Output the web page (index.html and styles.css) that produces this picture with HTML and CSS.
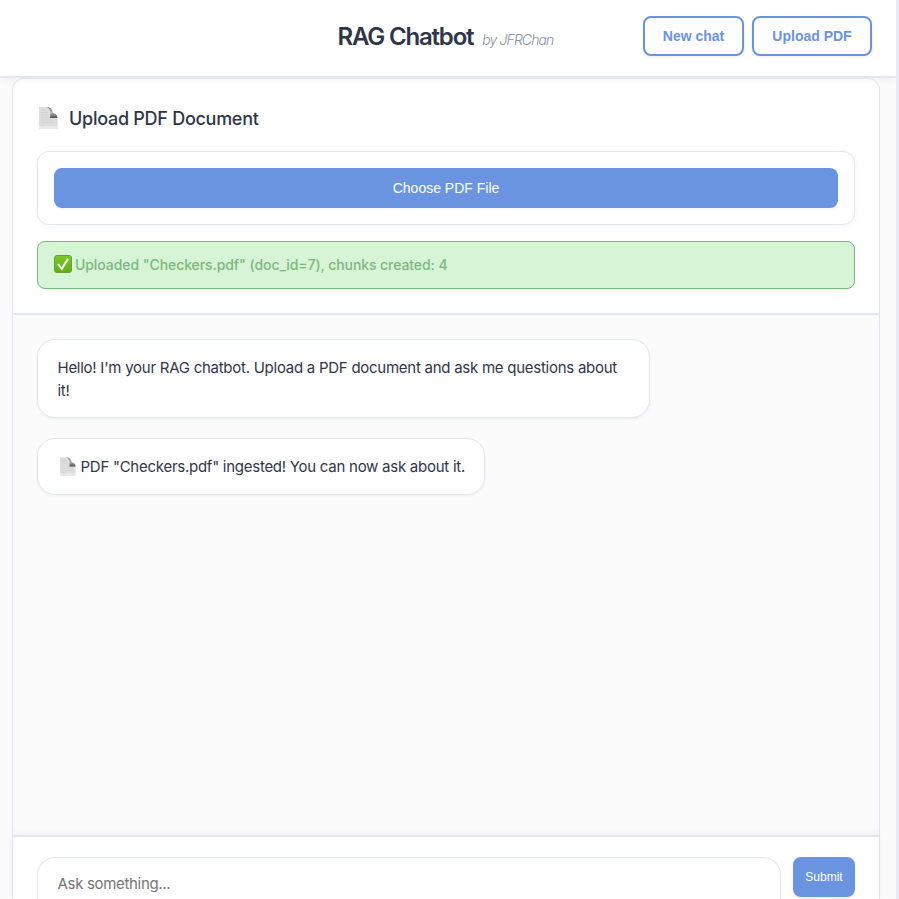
FILE: index.html
```html
<!DOCTYPE html>
<html lang="en">
<head>
<meta charset="utf-8">
<title>RAG Chatbot</title>
<link rel="stylesheet" href="styles.css">
</head>
<body>
<svg width="0" height="0" class="defs" aria-hidden="true">
  <defs>
    <linearGradient id="fold" x1="0" y1="0" x2="0" y2="1">
      <stop offset="0" stop-color="#777"/><stop offset=".5" stop-color="#b4b4b4"/><stop offset="1" stop-color="#4e4e4e"/>
    </linearGradient>
    <linearGradient id="leaf" x1="0" y1="0" x2="0" y2="1">
      <stop offset="0" stop-color="#79c92c"/><stop offset="1" stop-color="#62ad12"/>
    </linearGradient>
    <symbol id="page" viewBox="0 0 19 22">
      <path d="M0 0H9.5C12 1 12.5 4 12.5 7C15 7 18 8 18.5 11V22H0Z" fill="#dedede"/>
      <path d="M0 19H18.500V22H0Z" fill="#e9e9e9"/>
      <path d="M2 3H8M2 5.500H9M2 8H10M2 10.500H13M2 13H15M2 15.500H15M2 18.500H6" stroke="#d0d0d0" stroke-width=".7"/>
      <path d="M8 0C11 0 13.500 2.500 14 6C16.500 6.500 18.500 8 18.500 11H11C12 6 11.500 2 8 0Z" fill="url(#fold)"/>
    </symbol>
  </defs>
</svg>
<div class="app">
  <header class="header">
    <h1 class="title"><span class="brand">RAG Chatbot</span><span class="byline">by JFRChan</span></h1>
    <div class="actions">
      <button class="outline new">New chat</button>
      <button class="outline up">Upload PDF</button>
    </div>
  </header>
  <main class="card">
    <section class="upload">
      <h2 class="heading"><svg class="page"><use href="#page"/></svg><span>Upload PDF Document</span></h2>
      <div class="picker"><button class="choose">Choose PDF File</button></div>
      <div class="status">
        <svg class="check" viewBox="0 0 18 18"><rect x=".5" y=".5" width="17" height="17" rx="2.500" fill="url(#leaf)" stroke="#62a528"/><path d="M4 9L7.800 13.800L14 3.800" fill="none" stroke="#fff" stroke-width="2"/></svg>
        <span>Uploaded "Checkers.pdf" (doc_id=7), chunks created: 4</span>
      </div>
    </section>
    <section class="messages">
      <div class="bubble wide">Hello! I'm your RAG chatbot. Upload a PDF document and ask me questions about it!</div>
      <div class="bubble note"><svg class="page small"><use href="#page"/></svg><span>PDF "Checkers.pdf" ingested! You can now ask about it.</span></div>
    </section>
    <form class="composer">
      <div class="field"><span>Ask something...</span></div>
      <button class="submit" type="button">Submit</button>
    </form>
  </main>
</div>
</body>
</html>
```
FILE: styles.css
```css
* { box-sizing: border-box; }
html, body { height: 100%; margin: 0; overflow: hidden; }
body { background: #fbfbfb; color: #2f354a; font-family: Inter, "Liberation Sans", sans-serif; }
.defs { display: block; height: 0; }
.app { height: 899px; border-right: 3px solid #e8ecf2; overflow: hidden; }
.header {
  display: grid; grid-template-columns: 1fr auto 1fr; align-items: start;
  height: 78px; padding: 16px 24px 0; background: #fff;
  border-bottom: 2px solid #e1e7ef; box-shadow: 0 2px 8px rgba(0,0,0,.05);
}
.title { grid-column: 2; display: flex; align-items: baseline; gap: 9px; margin: 0; line-height: 42px; transform: translateX(-2.5px); white-space: nowrap; }
.brand { font-size: 24px; font-weight: 600; letter-spacing: -1.2px; }
.byline { font-size: 14px; font-weight: 300; font-style: italic; letter-spacing: -.9px; color: #8a8fa8; }
.actions { display: flex; justify-content: flex-end; gap: 8px; }
button { font-family: "Liberation Sans", Arial, sans-serif; border: 0; padding: 0; border-radius: 8px; white-space: nowrap; }
.outline { height: 40px; background: #fff; color: #6a94df; border: 2px solid #6a94df; font-size: 14px; font-weight: 700; box-shadow: 0 1px 3px rgba(0,0,0,.08); }
.new { width: 101px; }
.up { width: 120px; }
.card { width: 868px; height: 821px; margin-left: 12px; border: 1px solid #e2e6f0; border-bottom: 0; border-radius: 12px 12px 0 0; display: flex; flex-direction: column; }
.upload { flex: none; height: 236px; padding: 24px; background: #fff; border-bottom: 2px solid #e2e6f0; border-radius: 12px 12px 0 0; box-shadow: inset 0 5px 6px -5px rgba(0,0,0,.06); }
.heading { display: flex; align-items: center; height: 30px; margin: 0 0 18px; font-size: 18px; font-weight: 550; letter-spacing: -.27px; }
.page { width: 19px; height: 22px; margin: 0 11px 0 2px; flex: none; }
.picker { height: 74px; padding: 16px; background: #fff; border: 1px solid #e2e6f0; border-radius: 12px; box-shadow: 0 2px 8px rgba(0,0,0,.04); }
.choose { display: block; width: 100%; height: 40px; background: #6a94df; color: #fff; font-size: 14px; box-shadow: 0 1px 3px rgba(0,0,0,.06); }
.status { display: flex; align-items: center; gap: 3px; height: 48px; margin-top: 16px; padding: 0 16px 2px; background: #d7f4d7; border: 1px solid #7bb97b; border-radius: 8px; color: #7bb97b; font-size: 14px; font-weight: 500; letter-spacing: -.08px; box-shadow: 0 1px 3px rgba(0,0,0,.04); }
.check { width: 18px; height: 18px; flex: none; }
.messages { flex: none; height: 520px; padding: 24px; display: flex; flex-direction: column; align-items: flex-start; gap: 20px; }
.bubble { padding: 16px 19.5px; background: #fff; border: 1px solid #e2e6f0; border-radius: 18px; font-size: 15px; line-height: 23px; letter-spacing: -.26px; box-shadow: 0 1px 3px rgba(0,0,0,.05); }
.wide { width: 613px; height: 79px; }
.note { display: flex; align-items: center; width: 448px; height: 57px; white-space: nowrap; }
.small { width: 16px; height: 19px; margin: 0 5px 0 2px; }
.composer { flex: none; height: 64px; display: flex; gap: 12px; padding: 20px 24px 0; background: #fff; border-top: 2px solid #e2e6f0; box-shadow: 0 -2px 8px rgba(0,0,0,.05); }
.field { flex: 1; padding: 0 19.5px; border: 1px solid #e2e6f0; border-bottom: 0; border-radius: 18px 18px 0 0; font-size: 15px; line-height: 52px; letter-spacing: -.32px; color: #757575; }
.submit { width: 62px; height: 40px; background: #6a94df; color: #fff; font-size: 12px; box-shadow: 0 1px 3px rgba(0,0,0,.08); }
```
